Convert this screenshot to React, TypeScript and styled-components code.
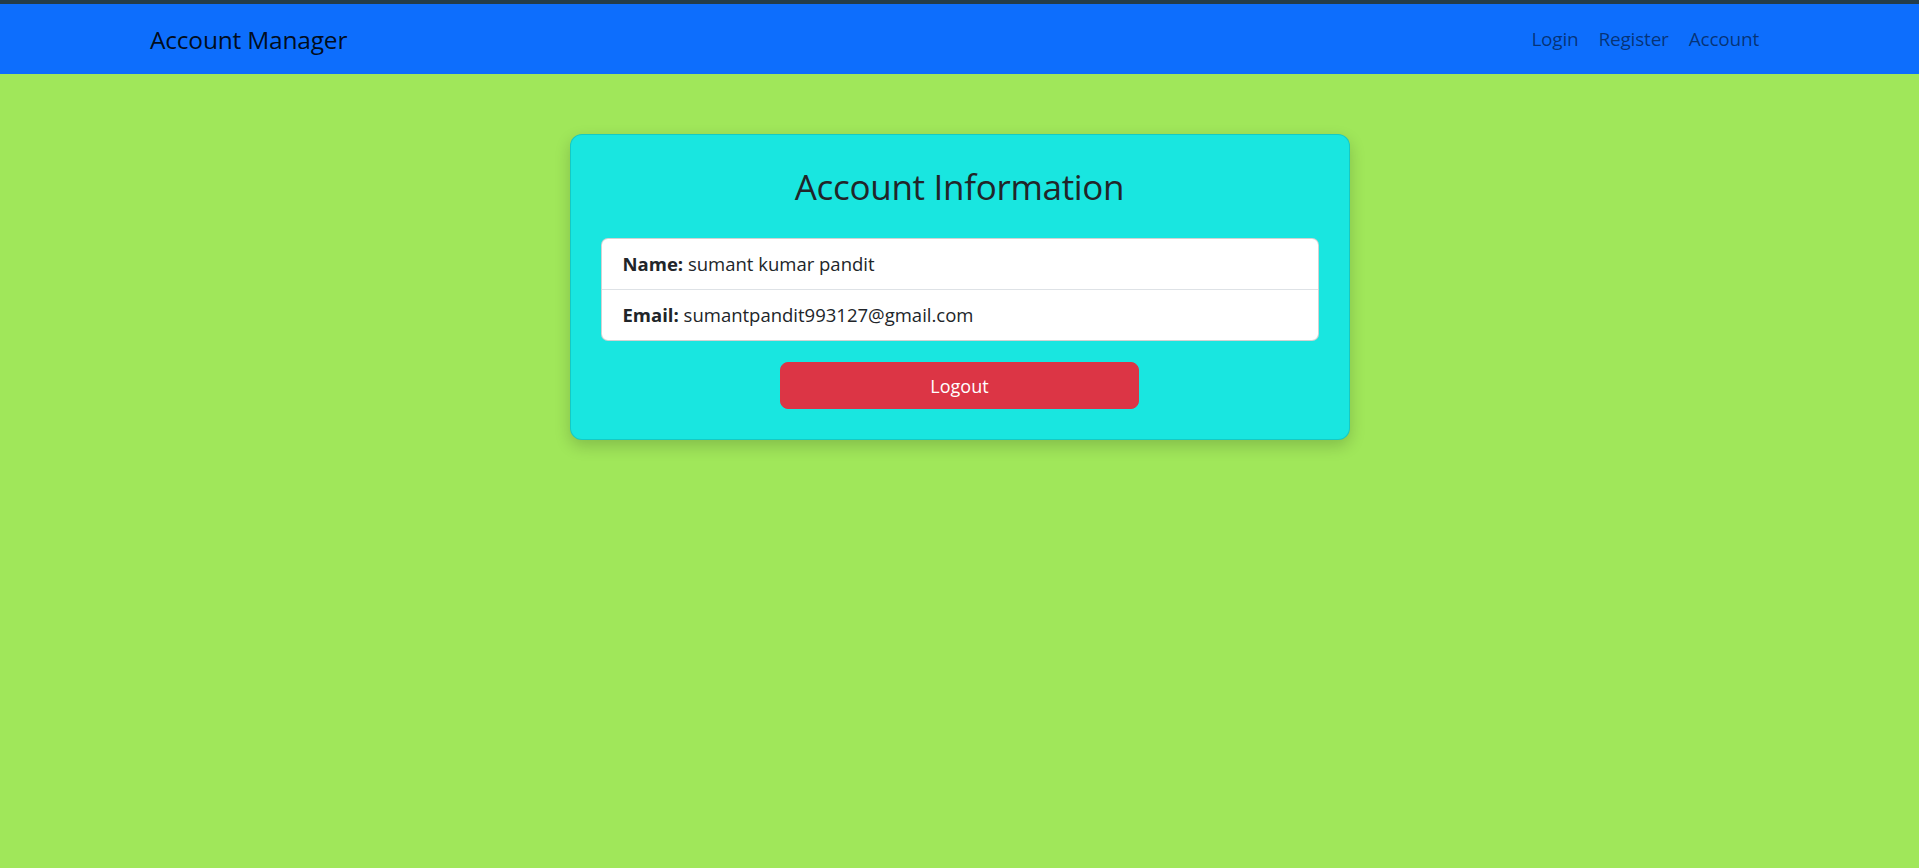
import React from "react";
import styled, { createGlobalStyle } from "styled-components";

const GlobalStyle = createGlobalStyle`
  * { box-sizing: border-box; }
  html, body { margin: 0; padding: 0; }
  body {
    background: #a0e75a;
    font-family: "Open Sans", "Noto Sans", Arial, sans-serif;
    color: #212529;
    min-height: 868px;
  }
`;

const TopStrip = styled.div`
  height: 4px;
  background: #243d4a;
`;

const Navbar = styled.nav`
  height: 70px;
  background: #0d6efd;
  display: flex;
  align-items: center;
  justify-content: space-between;
  padding: 0 150px;
`;

const Brand = styled.a`
  font-size: 24.5px;
  color: rgba(0, 0, 0, 0.9);
  text-decoration: none;
  letter-spacing: -0.2px;
`;

const NavList = styled.div`
  display: flex;
  align-items: center;
`;

const NavLink = styled.a`
  font-size: 19px;
  color: rgba(0, 0, 0, 0.55);
  text-decoration: none;
  padding: 8px 10px;
  letter-spacing: -0.2px;
`;

const Main = styled.main`
  display: flex;
  justify-content: center;
  padding-top: 60px;
`;

const Card = styled.section`
  width: 780px;
  background: #19e6e0;
  border: 1px solid rgba(0, 0, 0, 0.12);
  border-radius: 12px;
  box-shadow: 0 6px 16px rgba(0, 0, 0, 0.18);
  padding: 30px;
  display: flex;
  flex-direction: column;
  align-items: center;
`;

const Title = styled.h2`
  margin: 0 0 30px;
  font-size: 35px;
  font-weight: 500;
  line-height: 43px;
  color: #212529;
  letter-spacing: -0.3px;
`;

const List = styled.ul`
  list-style: none;
  margin: 0;
  padding: 0;
  width: 100%;
  background: #fff;
  border: 1px solid rgba(0, 0, 0, 0.175);
  border-radius: 7px;
`;

const Item = styled.li`
  padding: 10px 21px;
  font-size: 18.5px;
  line-height: 30px;
  color: #212529;
  & + & {
    border-top: 1px solid #dee2e6;
  }
  strong {
    font-weight: 700;
  }
`;

const LogoutButton = styled.button`
  margin-top: 21px;
  width: 50%;
  height: 47px;
  background: #dc3545;
  color: #fff;
  border: 1px solid #dc3545;
  border-radius: 8px;
  font-family: inherit;
  font-size: 18px;
  cursor: pointer;
`;

export default function App() {
  return (
    <>
      <GlobalStyle />
      <TopStrip />
      <Navbar>
        <Brand href="#">Account Manager</Brand>
        <NavList>
          <NavLink href="#">Login</NavLink>
          <NavLink href="#">Register</NavLink>
          <NavLink href="#">Account</NavLink>
        </NavList>
      </Navbar>
      <Main>
        <Card>
          <Title>Account Information</Title>
          <List>
            <Item>
              <strong>Name:</strong> sumant kumar pandit
            </Item>
            <Item>
              <strong>Email:</strong> sumantpandit993127@gmail.com
            </Item>
          </List>
          <LogoutButton>Logout</LogoutButton>
        </Card>
      </Main>
    </>
  );
}
